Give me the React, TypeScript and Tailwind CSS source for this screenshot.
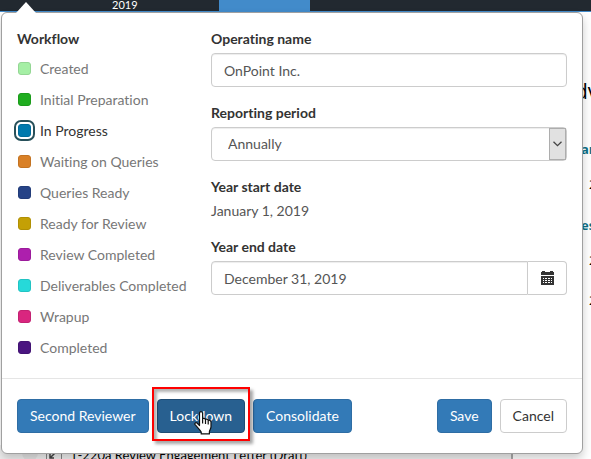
import { useState } from "react";

const stages = [
  { name: "Created", swatch: "bg-[#a5efa5] border-[#94d694]" },
  { name: "Initial Preparation", swatch: "bg-[#1fad1f] border-[#1b9b1b]" },
  { name: "In Progress", swatch: "bg-[#0079ad] border-[#006c9b]" },
  { name: "Waiting on Queries", swatch: "bg-[#d98026] border-[#c37322]" },
  { name: "Queries Ready", swatch: "bg-[#264387] border-[#223c79]" },
  { name: "Ready for Review", swatch: "bg-[#c4a005] border-[#b09004]" },
  { name: "Review Completed", swatch: "bg-[#ad1fad] border-[#9b1b9b]" },
  { name: "Deliverables Completed", swatch: "bg-[#26d9d9] border-[#22c3c3]" },
  { name: "Wrapup", swatch: "bg-[#d9267f] border-[#c32272]" },
  { name: "Completed", swatch: "bg-[#4a1580] border-[#421373]" },
];

const label = "mb-[5px] block h-5 font-bold leading-[22px] text-[#333]";
const field =
  "h-[34px] w-full border border-[#ccc] bg-white px-3 text-[#555] shadow-[inset_0_1px_1px_rgba(0,0,0,0.075)] outline-none";
const button = "h-[34px] rounded border px-3";
const primary = "border-[#2e6da4] bg-[#337ab7] text-white";

function CalendarIcon() {
  return (
    <svg width="13" height="14" viewBox="0 0 13 14" fill="#333" shapeRendering="crispEdges" aria-hidden="true">
      <path d="M1 0h3v1h5V0h3v1h1v3H0V1h1z" />
      <path
        fillRule="evenodd"
        d="M0 5h13v9H0zM2 7v1h1V7zm2 0v1h2V7zm3 0v1h2V7zm3 0v1h1V7zM2 9v1h1V9zm2 0v1h2V9zm3 0v1h2V9zm3 0v1h1V9zM2 11v1h1v-1zm2 0v1h2v-1zm3 0v1h2v-1zm3 0v1h1v-1z"
      />
    </svg>
  );
}

function HandCursor() {
  return (
    <svg className="absolute left-10 top-[22px]" width="18" height="24" viewBox="0 0 18 24" aria-hidden="true">
      <path
        d="M5.5 14.5V2.6C5.500 1.300 6.200.700 7 .700s1.600.600 1.600 1.900v5.200c.3-.6 2.600-.6 2.900.7.6-.6 2.400-.3 2.700.9.8-.5 2.800-.1 2.800 1.700v4.600c0 2-1.400 3.200-1.600 5v2.200H7.200v-1.900C5.900 18.800 3.500 16.500 1.100 13.700c-.8-1.100.5-2.600 1.900-1.700z"
        fill="#fff"
        stroke="#111"
        strokeWidth="1.2"
        strokeLinejoin="round"
      />
      <path d="M8.6 7.5v5M11.5 8.5v4.5M14.2 9.5v4" stroke="#111" strokeWidth="1.2" />
    </svg>
  );
}

function Workflow() {
  const [stage, setStage] = useState("In Progress");
  return (
    <fieldset className="w-[194px] shrink-0">
      <legend className={label}>Workflow</legend>
      {stages.map((s) => (
        <label
          key={s.name}
          className="flex h-[31px] items-center gap-[9px] pl-px text-[#777] has-checked:text-[#333]"
        >
          <input
            type="radio"
            name="stage"
            checked={stage === s.name}
            onChange={() => setStage(s.name)}
            className={`size-[13px] shrink-0 appearance-none rounded-[3px] border outline-[#27505a] checked:outline-2 checked:outline-offset-2 ${s.swatch}`}
          />
          <span className="whitespace-nowrap">{s.name}</span>
        </label>
      ))}
    </fieldset>
  );
}

function Details() {
  return (
    <div className="flex min-w-0 flex-1 flex-col gap-[15px]">
      <div>
        <label htmlFor="name" className={label}>Operating name</label>
        <input id="name" defaultValue="OnPoint Inc." className={`rounded ${field}`} />
      </div>
      <div>
        <label htmlFor="period" className={label}>Reporting period</label>
        <div className="relative">
          <select id="period" className={`appearance-none rounded pl-4 ${field}`}>
            <option>Annually</option>
            <option>Quarterly</option>
            <option>Monthly</option>
          </select>
          <span className="pointer-events-none absolute inset-y-px right-px flex w-[17px] items-center justify-center border border-[#adadad] bg-[#e1e1e1]">
            <svg width="9" height="6" viewBox="0 0 9 6" fill="none" stroke="#444" strokeWidth="1.3" aria-hidden="true">
              <path d="M.5.7l4 4 4-4" />
            </svg>
          </span>
        </div>
      </div>
      <div>
        <h3 className={label}>Year start date</h3>
        <p className="h-5 text-[#555]">January 1, 2019</p>
      </div>
      <div>
        <label htmlFor="end" className={label}>Year end date</label>
        <div className="flex">
          <input id="end" defaultValue="December 31, 2019" className={`min-w-0 flex-1 rounded-l ${field}`} />
          <button
            type="button"
            aria-label="Choose date"
            className="flex w-[39px] items-center justify-center rounded-r border border-l-0 border-[#ccc] bg-white"
          >
            <CalendarIcon />
          </button>
        </div>
      </div>
    </div>
  );
}

export default function App() {
  return (
    <div className="relative flex h-screen flex-col overflow-hidden bg-white font-['Lato',sans-serif] text-[14px] leading-5 [font-variant-ligatures:none]">
      <nav className="flex h-3 shrink-0 border-b border-[#428bca] bg-[#222930] text-white">
        <a href="#2019" className="w-[219px] pl-28 text-[11px] leading-[9px]">2019</a>
        <a href="#current" aria-label="Current" className="w-[91px] bg-[#428bca]" />
      </nav>

      <main className="flex min-h-0 flex-1 flex-col justify-between font-['Open_Sans',sans-serif] text-[13px]">
        <div className="flex w-4 flex-col self-end whitespace-nowrap pt-[67px] text-black">
          <h2 className="h-6 text-[21px] leading-6">dv</h2>
          <h3 className="mt-9 h-5 pl-1.5 font-bold text-[#0e7187]">ar</h3>
          <p className="mt-[15px] h-5 pl-3.5">2</p>
          <h3 className="mt-[21px] h-5 pl-1.5 font-bold text-[#0e7187]">es</h3>
          <p className="mt-[15px] h-5 pl-3.5">2</p>
          <p className="mt-5 h-5 pl-3.5">2</p>
        </div>
        <div className="flex h-3.5 w-[513px] shrink-0 items-start border-r-2 border-[#aaa] bg-[#f0f0f0] pl-[22px] text-black">
          <span className="size-4 shrink-0 rounded-full bg-[#e4e4e4]" />
          <svg className="ml-2 shrink-0" width="16" height="16" viewBox="0 0 16 16" fill="none" stroke="#444" aria-hidden="true">
            <rect x=".5" y=".5" width="15" height="15" fill="#eee" stroke="#888" />
            <path d="M4 13l7-7M8 5h4v4M4 9v4h4" strokeWidth="1.5" />
          </svg>
          <p className="pl-2 font-['Lato',sans-serif] leading-5">1-220a Review Engagement Letter (Draft)</p>
        </div>
      </main>

      <section
        aria-label="Engagement"
        className="absolute left-px right-2 top-3 rounded-md border border-[#a0a0a0] bg-white shadow-[0_5px_10px_rgba(0,0,0,0.2)]"
      >
        <svg className="absolute -top-[11px] left-[14px]" width="20" height="12" viewBox="0 0 20 12" aria-hidden="true">
          <path d="M0 12V11L10 0l10 11v1z" fill="#fff" />
        </svg>
        <div className="flex px-[15px] pb-[15px] pt-[15px]">
          <Workflow />
          <Details />
        </div>
        <footer className="flex gap-2 border-t border-[#e5e5e5] px-[15px] py-5">
          <button type="button" className={`${button} ${primary}`}>Second Reviewer</button>
          <div className="relative">
            <button type="button" className={`${button} border-[#204d74] bg-[#286090] text-white`}>Lockdown</button>
            <span className="pointer-events-none absolute -inset-x-[5px] -bottom-2 -top-3 border-2 border-[#f00] shadow-[3px_3px_3px_rgba(0,0,0,0.35),inset_3px_3px_3px_rgba(0,0,0,0.3)]">
              <HandCursor />
            </span>
          </div>
          <button type="button" className={`${button} ${primary}`}>Consolidate</button>
          <button type="button" className={`ml-auto ${button} ${primary}`}>Save</button>
          <button type="button" className={`${button} border-[#ccc] bg-white text-[#333]`}>Cancel</button>
        </footer>
      </section>
    </div>
  );
}
